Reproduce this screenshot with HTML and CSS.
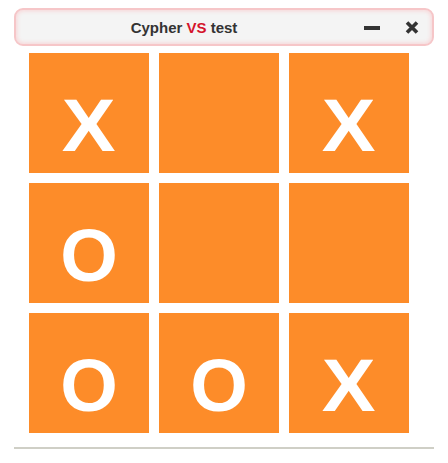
FILE: index.html
```html
<!DOCTYPE html>
<html>
<head>
<meta charset="utf-8">
<link rel="stylesheet" href="styles.css">
</head>
<body>
<div class="app">
  <div class="titlebar">
    <div class="title">Cypher <span class="vs">VS</span> test</div>
    <div class="buttons">
      <svg class="btn-min" width="16" height="4" viewBox="0 0 16 4"><rect x="0" y="0" width="16" height="4" fill="#333"/></svg>
      <svg class="btn-close" width="14" height="13" viewBox="0 0 14 13"><path d="M2 1.5 L12 11.5 M12 1.5 L2 11.5" stroke="#333" stroke-width="3.6" stroke-linecap="butt"/></svg>
    </div>
  </div>
  <div class="board">
    <div class="cell"><span class="mark mark-x">X</span></div>
    <div class="cell"></div>
    <div class="cell"><span class="mark mark-x">X</span></div>
    <div class="cell"><span class="mark">O</span></div>
    <div class="cell"></div>
    <div class="cell"></div>
    <div class="cell"><span class="mark">O</span></div>
    <div class="cell"><span class="mark">O</span></div>
    <div class="cell"><span class="mark mark-x">X</span></div>
  </div>
  <div class="rule"></div>
</div>
</body>
</html>
```
FILE: styles.css
```css
html, body {
  margin: 0;
  padding: 0;
  background: #ffffff;
}
.app {
  width: 420px;
  margin-left: 14px;
  padding-top: 8px;
  font-family: "Liberation Sans", Arial, sans-serif;
}
.titlebar {
  box-sizing: border-box;
  height: 38px;
  border: 2px solid #f6c6c8;
  border-radius: 9px;
  background: #f4f4f4;
  box-shadow: inset 0 0 4px 1px #f8d4d6;
  display: flex;
  align-items: center;
}
.title {
  flex: 1;
  text-align: center;
  font-weight: bold;
  font-size: 15px;
  color: #333333;
  padding-top: 1px;
}
.vs {
  color: #d4142c;
}
.buttons {
  width: 80px;
  display: flex;
  align-items: center;
  padding-left: 12px;
  box-sizing: border-box;
}
.btn-min {
  display: block;
  margin-top: 2px;
}
.btn-close {
  display: block;
  margin-left: 25px;
  margin-top: 1px;
}
.board {
  margin-top: 7px;
  margin-left: 15px;
  display: grid;
  grid-template-columns: repeat(3, 120px);
  grid-auto-rows: 120px;
  gap: 10px;
}
.cell {
  background: #fd8c29;
  color: #ffffff;
  font-size: 74px;
  font-weight: bold;
  line-height: 1;
  text-align: center;
  box-sizing: border-box;
  padding-top: 36px;
}
.mark {
  display: inline-block;
}
.mark-x {
  transform: scaleX(1.09);
}
.rule {
  margin-top: 14px;
  height: 2px;
  background: #cfcfc6;
}
```
